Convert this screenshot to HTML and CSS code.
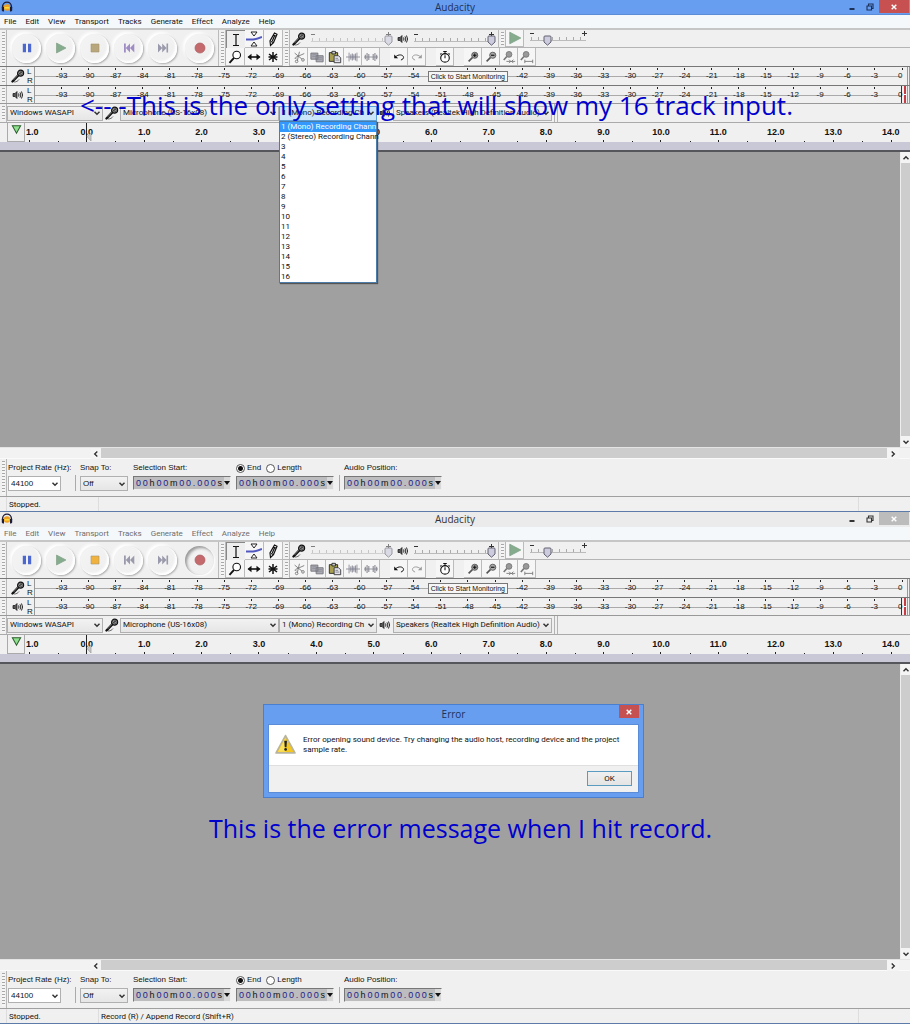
FILE: index.html
```
<!DOCTYPE html>
<html lang="en">
<head>
    <meta charset="UTF-8">
    <meta name="viewport" content="width=device-width, initial-scale=1.0">
    <title>Audacity</title>
    <link rel="stylesheet" href="styles.css">
</head>
<body>
    <svg class="sprite" aria-hidden="true">
        <symbol id="i-logo" viewBox="0 0 12 12">
            <circle cx="6" cy="6.5" r="3.2" fill="#f0a020"/>
            <path d="M3.6 6h4.8v1.6H3.600z" fill="#f7dc3c"/>
            <path d="M1.600 7V5.500a4.400 4.400 0 0 1 8.800 0V7" fill="none" stroke="#1c1c38" stroke-width="1.400"/>
            <path d="M.8 6h2.200v4.500H1.800L.8 9.500zM9 6h2.200v3.500l-1 1H9z" fill="#1c1c38"/>
        </symbol>
        <symbol id="i-mic" viewBox="0 0 14 14">
            <path d="M1.500 12.500l6-6.300" stroke="#111" stroke-width="2.400" fill="none" stroke-linecap="round"/>
            <path d="M2.500 11l4.500-5" stroke="#aaa" stroke-width=".6" fill="none"/>
            <circle cx="9.600" cy="4.200" r="3" fill="#999" stroke="#111" stroke-width="1.200"/>
            <path d="M7.500 3.500l3.500 2.700M8.500 2.200l3 2.200M7.500 6l3.500-3.800" stroke="#222" stroke-width=".7"/>
            <path d="M3 13c2.500 0 4-1 5-2.500" stroke="#333" stroke-width=".7" fill="none"/>
        </symbol>
        <symbol id="i-speaker" viewBox="0 0 12 12">
            <path d="M1 4.500h2L5 2.500v7L3 7.500H1z" fill="#555" stroke="#111" stroke-width=".7"/>
            <path d="M6.500 4.500q1 1.500 0 3M8 3.400q1.700 2.600 0 5.200M9.500 2.500q2.200 3.500 0 7" fill="none" stroke="#111" stroke-width=".9"/>
        </symbol>
        <symbol id="i-ibeam" viewBox="0 0 16 16"><path d="M5 2.500h2.200q.8 0 .8.800 0-.8.800-.8H11M8 3v10M5 13.500h6" fill="none" stroke="#111" stroke-width="1.200"/></symbol>
        <symbol id="i-envelope" viewBox="0 0 16 16">
            <path d="M5 1h6L8 5zM5 15h6l-3-4z" fill="#fff" stroke="#222"/>
            <path d="M0 8.500h7q4-.2 9-2.500" fill="none" stroke="#5058c0" stroke-width="2"/>
        </symbol>
        <symbol id="i-draw" viewBox="0 0 16 16"><path d="M5.500 14.500l-.5-4.500L9.500 2l2.500 1.200-3.500 8.500zM6 10.500l2.500 1M8.800 4.200l2.300 1.100M9.500 5L7.300 10" fill="none" stroke="#111" stroke-width="1.200"/></symbol>
        <symbol id="i-zoom" viewBox="0 0 16 16"><circle cx="9.700" cy="6" r="3.800" fill="#fff" stroke="#111" stroke-width="1.100"/><path d="M7 8.800L2.500 13.800" stroke="#111" stroke-width="1.900"/></symbol>
        <symbol id="i-shift" viewBox="0 0 16 16"><path d="M2.500 8h11" stroke="#111" stroke-width="1.600"/><path d="M5.500 4.800L1.500 8l4 3.200zM10.500 4.800l4 3.200-4 3.200z" fill="#111"/></symbol>
        <symbol id="i-multi" viewBox="0 0 16 16"><path d="M8 3v10M4 5l8 6M12 5l-8 6M3.500 8h9" stroke="#111" stroke-width="1.500"/></symbol>
        <symbol id="i-cut" viewBox="0 0 16 16"><path d="M3 3.500l8.500 7M8.500 2L6 12.500M14 4L4 8.500" stroke="#777" fill="none"/><circle cx="5.300" cy="13" r="1.500" fill="none" stroke="#777"/><circle cx="12.500" cy="11.300" r="1.500" fill="none" stroke="#777"/><path d="M3 9.500h2" stroke="#777"/></symbol>
        <symbol id="i-copy" viewBox="0 0 16 16"><path d="M1 3.500h8v7H1zM7 6.500h8v7H7z" fill="#aaaab4" stroke="#74747c"/><path d="M2.500 5.500h5M2.500 7.500h4M8.500 8.500h5M8.500 10.500h5" stroke="#86868e" stroke-width=".8"/></symbol>
        <symbol id="i-paste" viewBox="0 0 16 16"><path d="M1.500 3h9.500v10H1.500z" fill="#a8a050" stroke="#222"/><path d="M4.500 1.500h4v3h-4z" fill="#ccc" stroke="#222"/><path d="M7 6.500h5l2.500 2.500v5.500H7z" fill="#e4e4f0" stroke="#333"/><path d="M8.500 9.500h3M8.500 11.500h4.500" stroke="#666" stroke-width=".8"/></symbol>
        <symbol id="i-trim" viewBox="0 0 16 16"><path d="M0 8h16M3.500 3v10M12.500 3v10" stroke="#8a8a96"/><path d="M5.500 5v6M7.200 4v8M9 5v6M10.700 4v8" stroke="#777788"/></symbol>
        <symbol id="i-silence" viewBox="0 0 16 16"><path d="M0 8h16" stroke="#8a8a96"/><path d="M1.500 5.500v5M3.500 3.500v9M5.500 4.500v7M10.500 4.500v7M12.500 3.500v9M14.500 5.500v5" stroke="#858590" stroke-width="1.200"/></symbol>
        <symbol id="i-undo" viewBox="0 0 16 16"><path d="M4 8C7 4.500 13 5 13.200 8.500q0 2-3 3" fill="none" stroke="currentColor" stroke-width="1.100"/><path d="M2.500 5v4.500H7z" fill="currentColor"/></symbol>
        <symbol id="i-timer" viewBox="0 0 16 16"><circle cx="8" cy="9" r="4.900" fill="#fff" stroke="#111" stroke-width="1.300"/><path d="M6 1.600h4M8 2v3M8 9.300V6M12 3.800l1.500 1.200M4 3.800L2.500 5" stroke="#111" stroke-width="1.200"/></symbol>
        <symbol id="i-zoom-in" viewBox="0 0 16 16"><circle cx="10" cy="6" r="3.500" fill="#999" stroke="#555"/><path d="M7.300 8.700L3 13" stroke="#555" stroke-width="1.900"/><path d="M8 6h4M10 4v4" stroke="#111" stroke-width="1.200"/></symbol>
        <symbol id="i-zoom-out" viewBox="0 0 16 16"><circle cx="10" cy="6" r="3.500" fill="#aaa" stroke="#555"/><path d="M7.300 8.700L3 13" stroke="#555" stroke-width="1.900"/><path d="M8 6h4" stroke="#111" stroke-width="1.300"/></symbol>
        <symbol id="i-fit-sel" viewBox="0 0 16 16"><circle cx="8" cy="5" r="3.300" fill="#999" stroke="#777"/><path d="M5.500 7.500L2 11.500" stroke="#777" stroke-width="1.900"/><path d="M5 13h10M8 11l2 2-2 2M13 11l-2 2 2 2" stroke="#777" fill="none"/></symbol>
        <symbol id="i-fit" viewBox="0 0 16 16"><circle cx="7" cy="5" r="3.300" fill="#999" stroke="#777"/><path d="M4.500 7.500L1 11.500" stroke="#777" stroke-width="1.900"/><path d="M5.500 13h9M5.500 11v4M14.500 11v4" stroke="#777" fill="none"/></symbol>
        <symbol id="i-play" viewBox="0 0 12 12"><path d="M1.500 1l9.500 5-9.500 5z" fill="#86ac8e" stroke="#789a80" stroke-width=".6"/></symbol>
        <symbol id="i-pause" viewBox="0 0 12 12"><path d="M1.800 1.800h3.200v8.400H1.800zM7 1.800h3.200v8.400H7z" fill="#4c68d0"/></symbol>
        <symbol id="i-stop" viewBox="0 0 12 12"><path d="M2 2h8v8H2z" fill="currentColor" stroke="#a8946c" stroke-width=".6"/></symbol>
        <symbol id="i-start" viewBox="0 0 12 12"><path d="M1 1.500h1.800v9H1zM7 1.500v9L2.800 6zM11.300 1.500v9L7 6z" fill="currentColor"/></symbol>
        <symbol id="i-end" viewBox="0 0 12 12"><path d="M1 1.500L5.300 6 1 10.500zM5.200 1.500L9.500 6l-4.300 4.500zM9.500 1.500h1.600v9H9.500z" fill="#9a9aac"/></symbol>
        <symbol id="i-record" viewBox="0 0 12 12"><circle cx="6" cy="6" r="5" fill="#c46a6c" stroke="#aa5c60" stroke-width=".7"/></symbol>
        <symbol id="i-min" viewBox="0 0 8 8"><path d="M1.500 6h5" stroke="currentColor" stroke-width="2"/></symbol>
        <symbol id="i-restore" viewBox="0 0 8 8"><path d="M1 3h4.500v4H1zM2.500 2.700V1H7v4.500H5.800" fill="none" stroke="currentColor" stroke-width="1.100"/></symbol>
        <symbol id="i-close" viewBox="0 0 8 8"><path d="M1.700 1.700l4.600 4.600M6.300 1.700L1.700 6.300" stroke="#fff" stroke-width="1.400"/></symbol>
        <symbol id="i-pin" viewBox="0 0 12 12"><path d="M1.500 2h9L6 10z" fill="#8fe08f" stroke="#2c5c2c" stroke-width="1.100"/></symbol>
        <symbol id="i-pointer" viewBox="0 0 6 10"><path d="M5 1v8L1 4.500z" fill="#c8c8c8" stroke="#999" stroke-width=".7"/></symbol>
        <symbol id="i-chevron" viewBox="0 0 8 8"><path d="M1.500 2.700L4 5.300l2.500-2.600" fill="none" stroke="#333" stroke-width="1.400"/></symbol>
        <symbol id="i-warning" viewBox="0 0 20 20">
            <path d="M10 1.500L19 18H1z" fill="#f5c61c" stroke="#b9b49c" stroke-width="1.600" stroke-linejoin="round"/>
            <path d="M10 3.500v13.500H2.800z" fill="#fbe05c"/>
            <path d="M8.800 6.500h2.600l-.5 6H9.300z" fill="#222"/><circle cx="10.100" cy="14.700" r="1.300" fill="#222"/>
        </symbol>
    </svg>

    <template id="appWindow">
        <header class="titlebar">
            <svg class="logo"><use href="#i-logo"/></svg>
            <h1>Audacity</h1>
            <div class="window-buttons">
                <button aria-label="Minimize"><svg><use href="#i-min"/></svg></button>
                <button aria-label="Restore"><svg><use href="#i-restore"/></svg></button>
                <button class="close" aria-label="Close"><svg><use href="#i-close"/></svg></button>
            </div>
        </header>
        <nav class="menubar">
            <button>File</button>
            <button>Edit</button>
            <button>View</button>
            <button>Transport</button>
            <button>Tracks</button>
            <button>Generate</button>
            <button>Effect</button>
            <button>Analyze</button>
            <button>Help</button>
        </nav>

        <div class="toolbars">
            <span class="grip"></span>
            <div class="transport">
                <button aria-label="Pause"><svg><use href="#i-pause"/></svg></button>
                <button aria-label="Play"><svg><use href="#i-play"/></svg></button>
                <button class="stop" aria-label="Stop"><svg><use href="#i-stop"/></svg></button>
                <button class="start" aria-label="Skip to Start"><svg><use href="#i-start"/></svg></button>
                <button aria-label="Skip to End"><svg><use href="#i-end"/></svg></button>
                <button class="record" aria-label="Record"><svg><use href="#i-record"/></svg></button>
            </div>
            <span class="grip"></span>
            <div class="tools">
                <button class="tool pressed" aria-label="Selection"><svg><use href="#i-ibeam"/></svg></button>
                <button class="tool" aria-label="Envelope"><svg><use href="#i-envelope"/></svg></button>
                <button class="tool" aria-label="Draw"><svg><use href="#i-draw"/></svg></button>
                <button class="tool" aria-label="Zoom"><svg><use href="#i-zoom"/></svg></button>
                <button class="tool" aria-label="Time Shift"><svg><use href="#i-shift"/></svg></button>
                <button class="tool" aria-label="Multi-Tool"><svg><use href="#i-multi"/></svg></button>
            </div>
            <div class="toolbar-rows">
                <div class="toolbar-row">
                    <span class="grip"></span>
                    <div class="mixer">
                        <svg class="mic"><use href="#i-mic"/></svg>
                        <input class="slider dim" type="range" value="100" aria-label="Recording Volume">
                        <svg class="speaker"><use href="#i-speaker"/></svg>
                        <input class="slider" type="range" value="100" aria-label="Playback Volume">
                    </div>
                    <span class="grip"></span>
                    <button class="tool" aria-label="Play-at-Speed"><svg><use href="#i-play"/></svg></button>
                    <input class="slider speed" type="range" value="27" aria-label="Playback Speed">
                </div>
                <div class="toolbar-row">
                    <span class="grip"></span>
                    <button class="tool" aria-label="Cut"><svg><use href="#i-cut"/></svg></button>
                    <button class="tool" aria-label="Copy"><svg><use href="#i-copy"/></svg></button>
                    <button class="tool" aria-label="Paste"><svg><use href="#i-paste"/></svg></button>
                    <button class="tool" aria-label="Trim"><svg><use href="#i-trim"/></svg></button>
                    <button class="tool" aria-label="Silence"><svg><use href="#i-silence"/></svg></button>
                    <span class="spacer"></span>
                    <button class="tool" aria-label="Undo"><svg><use href="#i-undo"/></svg></button>
                    <button class="tool redo" aria-label="Redo"><svg><use href="#i-undo"/></svg></button>
                    <span class="spacer"></span>
                    <button class="tool" aria-label="Timer"><svg><use href="#i-timer"/></svg></button>
                    <span class="spacer"></span>
                    <button class="tool" aria-label="Zoom In"><svg><use href="#i-zoom-in"/></svg></button>
                    <button class="tool" aria-label="Zoom Out"><svg><use href="#i-zoom-out"/></svg></button>
                    <button class="tool" aria-label="Fit Selection"><svg><use href="#i-fit-sel"/></svg></button>
                    <button class="tool" aria-label="Fit Project"><svg><use href="#i-fit"/></svg></button>
                </div>
            </div>
        </div>

        <div class="meter">
            <span class="grip"></span>
            <svg class="mic"><use href="#i-mic"/></svg>
            <div class="channels"><span>L</span><span>R</span></div>
            <div class="scale"></div>
            <button class="monitor">Click to Start Monitoring</button>
        </div>
        <div class="meter playback">
            <span class="grip"></span>
            <svg class="speaker"><use href="#i-speaker"/></svg>
            <div class="channels"><span>L</span><span>R</span></div>
            <div class="scale"></div>
        </div>

        <div class="devices">
            <span class="grip"></span>
            <div class="select host"><select aria-label="Audio Host"><option>Windows WASAPI</option></select><svg><use href="#i-chevron"/></svg></div>
            <svg class="mic"><use href="#i-mic"/></svg>
            <div class="select input"><select aria-label="Recording Device"><option>Microphone (US-16x08)</option></select><svg><use href="#i-chevron"/></svg></div>
            <div class="select channel"><select aria-label="Recording Channels"><option>1 (Mono) Recording Ch</option></select><svg><use href="#i-chevron"/></svg>
                <ul class="channel-list"></ul>
            </div>
            <svg class="speaker"><use href="#i-speaker"/></svg>
            <div class="select output"><select aria-label="Playback Device"><option>Speakers (Realtek High Definition Audio)</option></select><svg><use href="#i-chevron"/></svg></div>
            <span class="dock-end"></span>
        </div>

        <div class="ruler">
            <button class="pin" aria-label="Pinned play head"><svg><use href="#i-pin"/></svg></button>
            <div class="ruler-scale"></div>
            <svg class="pointer"><use href="#i-pointer"/></svg>
        </div>
        <div class="ruler-selection"></div>

        <main class="tracks">
            <div class="canvas"></div>
            <div class="vscroll">
                <button class="up" aria-label="Scroll up"><svg><use href="#i-chevron"/></svg></button>
                <button aria-label="Scroll down"><svg><use href="#i-chevron"/></svg></button>
            </div>
        </main>
        <div class="hscroll">
            <button class="left" aria-label="Scroll left"><svg><use href="#i-chevron"/></svg></button>
            <span class="thumb"></span>
            <button class="right" aria-label="Scroll right"><svg><use href="#i-chevron"/></svg></button>
        </div>

        <form class="selection">
            <span class="grip"></span>
            <label class="field rate"><span>Project Rate (Hz):</span>
                <span class="select"><select><option>44100</option></select><svg><use href="#i-chevron"/></svg></span>
            </label>
            <span class="divider"></span>
            <label class="field snap"><span>Snap To:</span>
                <span class="select"><select><option>Off</option></select><svg><use href="#i-chevron"/></svg></span>
            </label>
            <div class="field"><span>Selection Start:</span><div class="time"></div></div>
            <div class="field">
                <div class="radios">
                    <label><input type="radio" name="mode" checked>End</label>
                    <label><input type="radio" name="mode">Length</label>
                </div>
                <div class="time"></div>
            </div>
            <span class="divider"></span>
            <div class="field"><span>Audio Position:</span><div class="time"></div></div>
        </form>
        <footer class="statusbar">
            <span class="state">Stopped.</span>
            <span class="hint"></span>
            <span class="rate-info"></span>
        </footer>
    </template>

    <section class="window channels-open">
        <p class="note">&lt;-- -This is the only setting that will show my 16 track input.</p>
    </section>
    <section class="window inactive" data-hint="Record (R) / Append Record (Shift+R)">
        <div class="dialog" role="alertdialog" aria-label="Error">
            <div class="dialog-title">
                <h2>Error</h2>
                <button class="close" aria-label="Close"><svg><use href="#i-close"/></svg></button>
            </div>
            <div class="dialog-body">
                <div class="message">
                    <svg><use href="#i-warning"/></svg>
                    <p>Error opening sound device. Try changing the audio host, recording device and the project sample rate.</p>
                </div>
                <div class="dialog-actions"><button>OK</button></div>
            </div>
        </div>
        <p class="note">This is the error message when I hit record.</p>
    </section>

    <script src="app.js"></script>
</body>
</html>
```
FILE: styles.css
```
:root {
    --face: #f0f0f0;
    --accent: #689ef0;
    --ui: Roboto, "Segoe UI", sans-serif;
    --title: "Open Sans", "Segoe UI", sans-serif;
    --arial: "Liberation Sans", Arial, sans-serif;
}

* {
    box-sizing: border-box;
}

body {
    margin: 0;
    background: var(--face);
    color: #111;
    font: 8px/10px var(--ui);
}

button, select, input {
    margin: 0;
    padding: 0;
    border: 0;
    background: none;
    color: inherit;
    font: inherit;
}

h1, h2, p, ul {
    margin: 0;
    padding: 0;
    font-weight: normal;
}

svg {
    display: block;
    flex: none;
}

.sprite {
    position: absolute;
    width: 0;
    height: 0;
}

.window {
    position: relative;
    display: flex;
    flex-direction: column;
    height: 50vh;
    min-height: 400px;
    border-bottom: 1px solid #5c7ba8;
}

/* title and menu */
.titlebar {
    display: grid;
    grid-template-columns: 1fr auto 1fr;
    height: 15px;
    flex: none;
    background: var(--accent);
    color: #1c3158;
    border-bottom: 1px solid #5b8cd8;
}

.titlebar h1 {
    font: 10px/15px var(--title);
}

.logo {
    width: 12px;
    height: 12px;
    margin: 1px 0 0 1px;
}

.window-buttons {
    display: flex;
    justify-content: flex-end;
    height: 13px;
    padding-right: 1px;
}

.window-buttons button {
    display: grid;
    place-items: center;
    width: 18px;
}

.window-buttons svg, .close svg {
    width: 8px;
    height: 8px;
}

.window-buttons .close {
    width: 30px;
}

.close {
    background: #c75050;
}

.inactive .titlebar {
    background: #ebebeb;
    border-bottom-color: #ebebeb;
    color: #333;
}

.inactive .titlebar .close {
    background: #bcbcbc;
}

.menubar {
    display: flex;
    gap: 9px;
    height: 15px;
    flex: none;
    padding: 0 4px;
    background: #f5f8fb;
    border-bottom: 2px solid #c6c6c6;
}

.inactive .menubar {
    color: #6d6d6d;
}

.grip {
    flex: none;
    width: 7px;
    border-right: 1px solid #b8b8b8;
    background: repeating-linear-gradient(#a8a8a8 0 1px, #f6f6f6 1px 3px) 2px 2px / 3px calc(100% - 4px) no-repeat;
}

/* toolbars */
.toolbars {
    display: flex;
    height: 36px;
    flex: none;
}

.transport {
    display: flex;
    align-items: center;
    gap: 5px;
    width: 212px;
    padding-left: 5px;
    border-right: 1px solid #bbb;
}

.transport button {
    display: grid;
    place-items: center;
    width: 29px;
    height: 29px;
    border-radius: 50%;
    background: linear-gradient(135deg, #f4f4f4, #eee);
    box-shadow: 1px 1px 2px #aaa, -2px -2px 3px #fff, inset -2px -2px 2px #fff;
}

.transport svg {
    width: 12px;
    height: 12px;
}

.stop { color: #b8a67c; }
.start { color: #a08cc4; }

.inactive .stop { color: #f0b23c; }
.inactive .start { color: #9a9aac; }

.transport .record {
    margin-left: 3px;
}

.inactive .record {
    box-shadow: inset 2px 2px 3px #999, 1px 1px 2px #fff;
}

.tools {
    display: grid;
    grid-template-columns: repeat(3, 19px);
    grid-template-rows: 1fr 1fr;
}

.tool {
    display: grid;
    place-items: center;
    width: 18px;
    flex: none;
    border-right: 1px solid #bbb;
    border-bottom: 1px solid #bbb;
    background: #f6f6f6;
}

.tools .tool {
    width: 19px;
}

.tool svg {
    width: 14px;
    height: 14px;
}

.tools svg {
    width: 16px;
    height: 16px;
}

.tool.pressed {
    border: 1px solid #888;
    border-width: 1px 0 0 1px;
    background: #eee;
}

.redo {
    color: #999;
}

.redo svg {
    transform: scaleX(-1);
}

.toolbar-rows {
    flex: 1;
    display: grid;
    grid-template-rows: 1fr 1fr;
}

.toolbar-row {
    display: flex;
    border-bottom: 1px solid #b4b4b4;
}

.toolbar-row:last-child {
    border-bottom: 0;
}

.mixer {
    display: flex;
    align-items: center;
    gap: 4px;
    width: 209px;
    padding-left: 2px;
    border-right: 1px solid #bbb;
}

.mic {
    width: 14px;
    height: 14px;
}

.speaker {
    width: 12px;
    height: 12px;
}

.slider {
    appearance: none;
    width: 83px;
    height: 16px;
    background:
        linear-gradient(#333, #333) 1px 3px / 4px 1px no-repeat,
        linear-gradient(#333, #333) calc(100% - 2px) 3px / 5px 1px no-repeat,
        linear-gradient(#333, #333) calc(100% - 4px) 1px / 1px 5px no-repeat,
        linear-gradient(#bbb, #bbb) 1px 10px / calc(100% - 4px) 1px no-repeat,
        repeating-linear-gradient(90deg, #aaa 0 1px, transparent 1px 7px) 2px 7px / calc(100% - 5px) 3px no-repeat;
}

.slider.dim {
    opacity: .6;
}

.slider::-webkit-slider-thumb {
    appearance: none;
    width: 9px;
    height: 11px;
    margin-top: 4px;
    background: url("data:image/svg+xml,%3Csvg xmlns='http://www.w3.org/2000/svg' viewBox='0 0 9 11'%3E%3Cpath d='M1 2q0-1 1-1h5q1 0 1 1v5l-3.500 3.200L1 7z' fill='%23ccccde' stroke='%23606070'/%3E%3C/svg%3E");
}

.slider.speed {
    width: 60px;
    margin-left: 5px;
}

.spacer {
    width: 10px;
}

/* meters */
.meter {
    position: relative;
    display: flex;
    align-items: center;
    height: 19px;
    flex: none;
    border-top: 1px solid #777;
    font: 8px/9px var(--arial);
}

.meter.playback {
    height: 18px;
}

.meter .grip, .devices .grip {
    align-self: stretch;
}

.meter .mic {
    margin-left: 4px;
}

.meter .speaker {
    margin: 0 1px 0 5px;
}

.channels {
    display: grid;
    width: 7px;
    margin-left: 2px;
}

.scale {
    flex: 1;
    align-self: stretch;
    display: flex;
    padding-left: 13px;
    border-left: 1px solid #999;
    background: linear-gradient(#aaa, #aaa) 0 9px / calc(100% - 9px) 1px no-repeat;
}

.scale span {
    flex: 1 1 0;
    min-width: 0;
    padding-top: 4px;
    text-align: center;
    background: linear-gradient(#222, #222) 50% 1px / 1px 2px no-repeat;
}

.scale span:last-child {
    flex: 0 0 22px;
    padding-left: 10px;
    text-align: left;
    border-right: 3px double #999;
    background-position: 14px 1px;
}

.playback .scale span:last-child {
    background:
        linear-gradient(#2a2a90, #2a2a90) 13px 0 / 1px 100% no-repeat,
        repeating-linear-gradient(#c83c46 0 8px, #fff 8px 9px) 16px 0 / 2px 100% no-repeat;
}

.monitor {
    position: absolute;
    left: 47%;
    top: 4px;
    height: 11px;
    padding: 0 2px;
    border: 1px solid #777;
    background: #f6f6f6;
    font: 7px/9px var(--arial);
    white-space: nowrap;
}

/* device bar */
.devices {
    display: flex;
    align-items: center;
    height: 19px;
    flex: none;
    border-top: 1px solid #999;
}

.select {
    position: relative;
    display: flex;
    align-items: center;
    height: 15px;
    border: 1px solid #b0b0b0;
    background: linear-gradient(#f2f2f2, #e6e6e6);
}

.select select {
    appearance: none;
    width: 100%;
    height: 13px;
    padding: 0 2px;
    white-space: nowrap;
}

.select svg {
    width: 8px;
    height: 8px;
    margin: 0 1px 0 -9px;
    pointer-events: none;
}

.host { width: 96px; }
.devices .mic { margin: 0 1px 0 2px; }
.input { width: 159px; }
.channel { width: 98px; }
.devices .speaker { margin: 0 2px 0 2px; }
.output { width: 159px; }

.channels-open .channel {
    background: #cbe5fa;
    border-color: #5a9fd6;
}

.dock-end {
    align-self: stretch;
    width: 4px;
    margin-left: 2px;
    border: 1px solid #b4b4b4;
    border-width: 0 1px;
}

.channel-list {
    display: none;
    position: absolute;
    z-index: 1;
    top: 14px;
    left: -1px;
    width: 98px;
    border: 1px solid #4c7ca8;
    background: #fff;
    box-shadow: 1px 1px 1px #555;
    list-style: none;
}

.channels-open .channel-list {
    display: block;
}

.channel-list li {
    height: 10px;
    padding-left: 1px;
    white-space: nowrap;
}

.channel-list .selected {
    background: #3399ff;
    color: #fff;
}

/* time ruler */
.ruler {
    position: relative;
    display: flex;
    height: 20px;
    flex: none;
    border-top: 1px solid #aaa;
}

.pin {
    display: grid;
    place-items: start center;
    width: 18px;
    margin-left: 7px;
    padding-top: 1px;
    border: 1px solid #aaa;
    border-width: 0 1px 1px;
}

.pin svg {
    width: 11px;
    height: 11px;
}

.pointer {
    position: absolute;
    left: 86px;
    top: 9px;
    width: 6px;
    height: 10px;
}

.ruler-scale {
    flex: 1;
    display: flex;
    overflow: hidden;
    font: bold 9px/19px var(--arial);
}

.ruler-scale span {
    flex: 1 1 0;
    text-align: center;
    background:
        linear-gradient(#222, #222) 50% 100% / 1px 2px no-repeat,
        linear-gradient(#222, #222) 0 100% / 1px 1px no-repeat;
}

.ruler-scale span:first-child {
    flex: 0 0 33px;
    padding-left: 1px;
    text-align: left;
    background-position: 4px 100%;
}

.ruler-scale span:nth-child(2) {
    background:
        linear-gradient(#222, #222) 50% 0 / 1px 100% no-repeat,
        linear-gradient(#222, #222) 0 100% / 1px 1px no-repeat;
}

.ruler-scale span:last-child {
    flex: 0 0 48px;
    padding-left: 20px;
    text-align: left;
    background-position: 29px 100%, 0 100%;
}

.ruler-selection {
    height: 10px;
    flex: none;
    background: #c8c8d6;
    border-bottom: 2px solid #55555c;
}

/* track area */
.tracks {
    flex: 1;
    display: flex;
    min-height: 0;
}

.canvas {
    flex: 1;
    background: #a0a0a0;
}

.vscroll {
    display: flex;
    flex-direction: column;
    justify-content: space-between;
    width: 10px;
    background: #cdcdcd;
    border-left: 1px solid #eee;
}

.vscroll button, .hscroll button {
    display: grid;
    place-items: center;
    height: 11px;
    background: #f4f4f4;
}

.vscroll svg, .hscroll svg {
    width: 8px;
    height: 8px;
}

.up svg { transform: rotate(180deg); }
.left svg { transform: rotate(90deg); }
.right svg { transform: rotate(-90deg); }

.hscroll {
    display: flex;
    justify-content: space-between;
    height: 12px;
    flex: none;
    padding: 0 11px 0 91px;
    border-top: 1px solid #e4e4e4;
    border-bottom: 1px solid #fafafa;
    background: #f2f2f2;
}

.hscroll .left { width: 10px; }
.hscroll .right { width: 12px; }

.thumb {
    flex: 1;
    background: #cdcdcd;
}

/* selection bar */
.selection {
    display: flex;
    gap: 5px;
    height: 38px;
    flex: none;
    border-bottom: 1px solid #a0a0a0;
    font: 8px/10px var(--arial);
}

.selection .grip {
    margin-right: -4px;
}

.field {
    display: flex;
    flex-direction: column;
    gap: 3px;
    padding-top: 4px;
    white-space: nowrap;
}

.rate { width: 62px; }
.snap { width: 48px; }

.rate .select {
    width: 53px;
    background: #fff;
}

.selection .divider {
    width: 1px;
    height: 16px;
    margin: 16px -1px 0 0;
    background: #aaa;
}

.radios {
    display: flex;
    gap: 5px;
}

.radios label {
    display: flex;
    align-items: center;
    gap: 2px;
}

.radios input {
    appearance: none;
    width: 9px;
    height: 9px;
    border: 1px solid #555;
    border-radius: 50%;
    background: #fff;
}

.radios input:checked {
    background: radial-gradient(#111 0 2px, #fff 3px);
}

.time {
    display: flex;
    justify-content: space-between;
    align-items: center;
    width: 98px;
    height: 14px;
    padding-left: 2px;
    border: 1px solid #8c8c8c;
    border-color: #777 #eee #eee #777;
    background: #bdbdbf;
    font-size: 9px;
}

.time .digit {
    color: #22228c;
}

.time button {
    width: 6px;
    height: 12px;
    background: #d8d8d8;
    display: grid;
    place-items: center;
}

.time button::before {
    content: "";
    border: 3px solid transparent;
    border-top: 4px solid #111;
    border-bottom: 0;
}

.statusbar {
    display: flex;
    height: 14px;
    flex: none;
    padding-left: 6px;
    line-height: 16px;
}

.statusbar span {
    border-left: 1px solid #ddd;
    padding-left: 2px;
}

.state { width: 92px; }
.hint { flex: 1; }
.rate-info { width: 52px; }

/* captions over the windows */
.note {
    position: absolute;
    z-index: 2;
    color: #0000cd;
    font: 25px/30px var(--title);
    white-space: nowrap;
}

.channels-open .note {
    left: 80px;
    top: 90px;
    font-size: 26px;
}

.inactive .note {
    left: 209px;
    top: 301px;
}

.dialog {
    position: absolute;
    top: 192px;
    left: 263px;
    width: 381px;
    padding: 0 4px 4px;
    border: 1px solid #4a7fd0;
    background: var(--accent);
}

.dialog-title {
    position: relative;
    height: 19px;
}

.dialog-title h2 {
    font: 10px/19px var(--title);
    text-align: center;
    color: #1c3158;
}

.dialog-title .close {
    position: absolute;
    top: 0;
    right: 0;
    display: grid;
    place-items: center;
    width: 20px;
    height: 13px;
}

.dialog-body {
    border: 1px solid #5b8cd8;
    background: #fff;
}

.message {
    display: flex;
    gap: 7px;
    padding: 9px 14px 10px 6px;
    height: 40px;
}

.message svg {
    width: 21px;
    height: 21px;
}

.message p {
    padding-top: 1px;
}

.dialog-actions {
    display: flex;
    justify-content: flex-end;
    padding: 5px 6px 6px;
    border-top: 1px solid #dfdfdf;
    background: var(--face);
}

.dialog-actions button {
    width: 45px;
    height: 15px;
    border: 1px solid #5a9bc0;
    background: linear-gradient(#f0f0f0, #e4e4e4);
}
```
FILE: app.js
```
const template = document.getElementById("appWindow");

function addSpans(parent, labels) {
    labels.forEach(label => {
        const span = document.createElement("span");
        span.textContent = label;
        parent.appendChild(span);
    });
}

document.querySelectorAll(".window").forEach(win => {
    win.prepend(template.content.cloneNode(true));

    win.querySelectorAll(".scale").forEach(scale => {
        const labels = [];
        for (let db = -93; db <= 0; db += 3) labels.push(db);
        addSpans(scale, labels);
    });

    const seconds = ["1.0"];
    for (let s = 0; s <= 14; s++) seconds.push(s.toFixed(1));
    addSpans(win.querySelector(".ruler-scale"), seconds);

    win.querySelectorAll(".time").forEach(time => {
        addSpans(time, [..."00h00m00.000s"]);
        time.querySelectorAll("span").forEach(span => {
            if (/[\d.]/.test(span.textContent)) span.className = "digit";
        });
        const button = document.createElement("button");
        button.type = "button";
        button.setAttribute("aria-label", "Time format");
        time.appendChild(button);
    });

    const list = win.querySelector(".channel-list");
    for (let i = 1; i <= 16; i++) {
        const item = document.createElement("li");
        item.textContent = i;
        if (i === 1) {
            item.textContent = "1 (Mono) Recording Chann";
            item.className = "selected";
        }
        if (i === 2) item.textContent = "2 (Stereo) Recording Chann";
        list.appendChild(item);
    }

    win.querySelector(".hint").textContent = win.dataset.hint || "";
});
```
